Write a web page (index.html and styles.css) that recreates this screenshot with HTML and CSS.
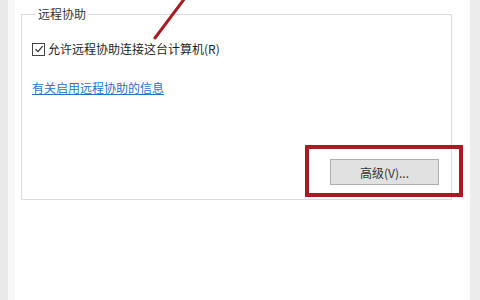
FILE: index.html
```html
<!DOCTYPE html>
<html lang="zh-CN">
<head>
  <meta charset="UTF-8">
  <title>远程协助</title>
  <link rel="stylesheet" href="styles.css">
</head>
<body>

  <div class="window">
    <div class="edge-left"></div>
    <div class="edge-soft"></div>

    <div class="panel">
      <fieldset class="group">
        <legend>远程协助</legend>

        <label class="check-row">
          <span class="checkbox">
            <svg width="10" height="10" viewBox="0 0 10 10">
              <path d="M1.5 5.2 L4 7.6 L8.6 2.2" fill="none" stroke="#333" stroke-width="1.2"/>
            </svg>
          </span>
          允许远程协助连接这台计算机(R)
        </label>

        <a class="help-link" href="#">有关启用远程协助的信息</a>

        <div class="button-row">
          <button class="btn">高级(V)...</button>
        </div>
      </fieldset>
    </div>

    <div class="edge-right"></div>
  </div>

  <!-- annotation marks drawn over the dialog -->
  <svg class="arrow" width="480" height="60" viewBox="0 0 480 60">
    <line x1="188" y1="-6" x2="155" y2="38" stroke="#a81d22" stroke-width="3" stroke-linecap="round"/>
  </svg>
  <div class="highlight"></div>

</body>
</html>
```

FILE: styles.css
```css
html, body {
  margin: 0;
  padding: 0;
}
body {
  width: 480px;
  height: 300px;
  overflow: hidden;
  position: relative;
  background: #fff;
  font-family: "Noto Sans CJK SC", "Liberation Sans", sans-serif;
  font-size: 12px;
  color: #1e1e1e;
}
.window {
  display: flex;
  height: 300px;
}
.edge-left {
  width: 8px;
  background: #e9e9e9;
}
.edge-soft {
  width: 7px;
  background: #f7f7f7;
}
.panel {
  flex: 1;
  padding: 6px 18px 0 6px;
}
.edge-right {
  width: 10px;
  background: #ececec;
}
.group {
  margin: 0;
  padding: 20px 12px 14px 10px;
  border: 1px solid #dcdcdc;
  min-width: 0;
}
.group legend {
  padding: 0 2px;
  margin-left: 4px;
  line-height: 16px;
  color: #333;
}
.check-row {
  display: flex;
  align-items: center;
  gap: 3px;
  height: 14px;
  line-height: 14px;
}
.checkbox {
  width: 11px;
  height: 11px;
  border: 1px solid #444;
  display: flex;
  align-items: center;
  justify-content: center;
  background: #fff;
}
.help-link {
  display: inline-block;
  margin-top: 25px;
  line-height: 14px;
  color: #2a72c8;
  text-decoration: underline;
}
.button-row {
  display: flex;
  justify-content: flex-end;
  margin-top: 63px;
}
.btn {
  width: 109px;
  height: 26px;
  padding: 0;
  background: #e1e1e1;
  border: 1px solid #adadad;
  font-family: inherit;
  font-size: 12px;
  color: #333;
}
.arrow {
  position: absolute;
  left: 0;
  top: 0;
}
.highlight {
  position: absolute;
  left: 305px;
  top: 145px;
  width: 150px;
  height: 44px;
  border: 4px solid #a91b20;
}
```
